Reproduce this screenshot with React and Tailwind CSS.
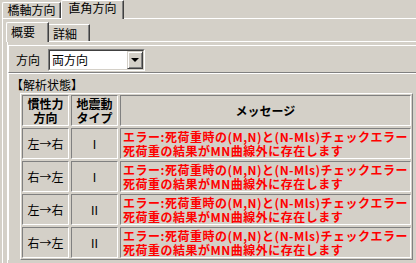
const rows = [
  { dir: "左→右", type: "Ⅰ" },
  { dir: "右→左", type: "Ⅰ" },
  { dir: "左→右", type: "Ⅱ" },
  { dir: "右→左", type: "Ⅱ" },
];

const cell =
  "flex items-center border border-t-[#808080] border-l-[#808080] border-b-white border-r-white";

export default function App() {
  return (
    <div className="w-[416px] h-[263px] overflow-hidden bg-[#d4d0c8] font-['Noto_Sans_CJK_JP',sans-serif] text-[12px] text-black">
      {/* outer tabs */}
      <div className="flex items-start pl-[2px] h-[18px]">
        <div className="mt-[2px] w-[59px] h-[16px] border-t border-l border-r border-white border-r-[#404040] shadow-[inset_-1px_0_#808080] rounded-tl-[2px] text-center leading-[14px]">
          橋軸方向
        </div>
        <div className="relative z-10 w-[63px] h-[19px] border-t border-l border-r border-white border-r-[#404040] shadow-[inset_-1px_0_#808080] rounded-tl-[2px] bg-[#d4d0c8] text-center leading-[14px]">
          直角方向
        </div>
      </div>

      {/* outer page */}
      <div className="ml-[2px] h-[245px] border-t border-l border-white">
        {/* inner tabs */}
        <div className="flex items-start pl-[3px] pt-[3px] h-[22px]">
          <div className="relative z-10 w-[43px] h-[20px] border-t border-l border-r border-white border-r-[#404040] shadow-[inset_-1px_0_#808080] rounded-tl-[2px] bg-[#d4d0c8] pl-[4px] pt-[2px] leading-[14px]">
            概要
          </div>
          <div className="mt-[2px] w-[41px] h-[17px] border-t border-r border-white border-r-[#404040] shadow-[inset_-1px_0_#808080] pl-[4px] pt-[2px] leading-[14px]">
            詳細
          </div>
        </div>

        {/* inner page */}
        <div className="ml-[4px] h-[222px] border-t border-l border-white">
          <div className="mt-[3px] h-[28px] flex items-start border-t border-l border-b border-white border-b-[#808080]">
            <span className="ml-[7px] mt-[7px] leading-[14px]">方向</span>
            <div className="ml-[8px] mt-[3px] w-[97px] h-[22px] border border-t-[#808080] border-l-[#808080] border-b-white border-r-white">
              <div className="h-full flex items-center bg-white border border-t-[#404040] border-l-[#404040] border-b-[#d4d0c8] border-r-[#d4d0c8]">
                <span className="pl-[2px] leading-[14px]">両方向</span>
                <div className="ml-auto w-[16px] h-[18px] flex items-center justify-center bg-[#d4d0c8] border border-t-[#d4d0c8] border-l-[#d4d0c8] border-b-[#404040] border-r-[#404040] shadow-[inset_1px_1px_#fff,inset_-1px_-1px_#808080]">
                  <div className="w-0 h-0 border-l-[4px] border-r-[4px] border-t-[4px] border-transparent border-t-black" />
                </div>
              </div>
            </div>
          </div>

          <div className="border-t border-l border-white">
            <div className="mt-[4px] pl-[2px] leading-[14px]">【解析状態】</div>
            <div className="ml-[11px] mt-[1px] w-[393px] grid grid-cols-[47px_47px_291px] auto-rows-[31px] gap-[2px] p-px border border-t-white border-l-white border-b-[#808080] border-r-[#808080]">
              <div className={`${cell} justify-center text-center font-bold leading-[14px]`}>
                慣性力
                <br />
                方向
              </div>
              <div className={`${cell} justify-center text-center font-bold leading-[14px]`}>
                地震動
                <br />
                タイプ
              </div>
              <div className={`${cell} justify-center font-bold`}>メッセージ</div>

              {rows.map((r, i) => (
                <div key={i} className="contents">
                  <div className={`${cell} justify-center`}>{r.dir}</div>
                  <div className={`${cell} justify-center`}>{r.type}</div>
                  <div className={`${cell} pl-[2px] font-bold text-[#ff0000] leading-[14px] tracking-[0.5px] whitespace-nowrap`}>
                    <div>
                      エラー:死荷重時の(M,N)と(N-Mls)チェックエラー
                      <br />
                      死荷重の結果がMN曲線外に存在します
                    </div>
                  </div>
                </div>
              ))}
            </div>
          </div>
        </div>
      </div>
    </div>
  );
}
